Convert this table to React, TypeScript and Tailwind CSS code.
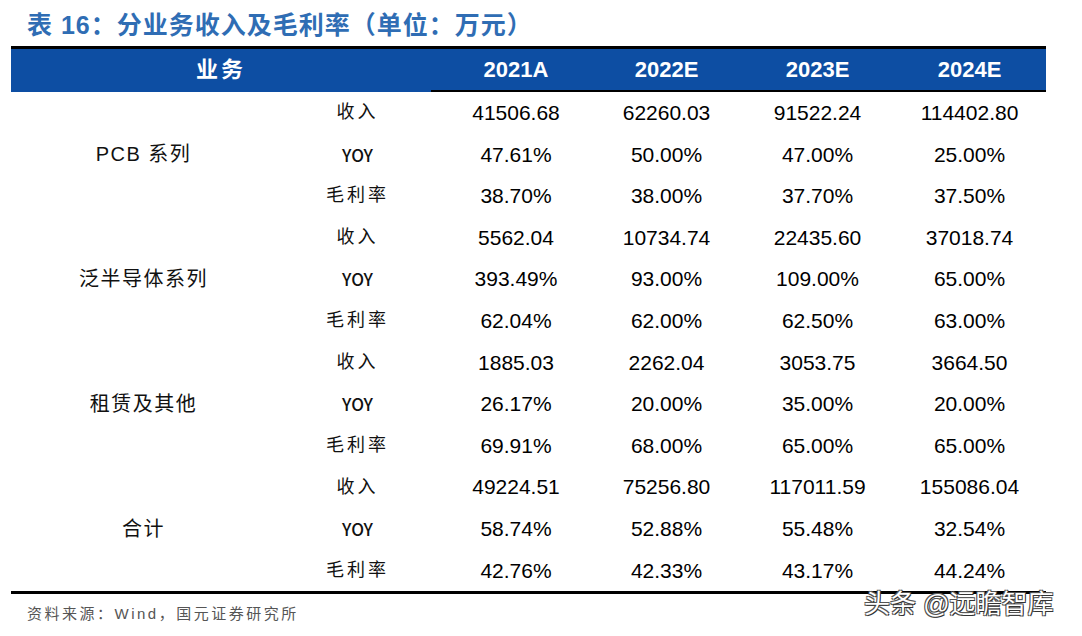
const cols = ["2021A", "2022E", "2023E", "2024E"];

const groups = [
  {
    name: "PCB 系列",
    rows: [
      ["收入", "41506.68", "62260.03", "91522.24", "114402.80"],
      ["YOY", "47.61%", "50.00%", "47.00%", "25.00%"],
      ["毛利率", "38.70%", "38.00%", "37.70%", "37.50%"],
    ],
  },
  {
    name: "泛半导体系列",
    rows: [
      ["收入", "5562.04", "10734.74", "22435.60", "37018.74"],
      ["YOY", "393.49%", "93.00%", "109.00%", "65.00%"],
      ["毛利率", "62.04%", "62.00%", "62.50%", "63.00%"],
    ],
  },
  {
    name: "租赁及其他",
    rows: [
      ["收入", "1885.03", "2262.04", "3053.75", "3664.50"],
      ["YOY", "26.17%", "20.00%", "35.00%", "20.00%"],
      ["毛利率", "69.91%", "68.00%", "65.00%", "65.00%"],
    ],
  },
  {
    name: "合计",
    rows: [
      ["收入", "49224.51", "75256.80", "117011.59", "155086.04"],
      ["YOY", "58.74%", "52.88%", "55.48%", "32.54%"],
      ["毛利率", "42.76%", "42.33%", "43.17%", "44.24%"],
    ],
  },
];

const cjk = { fontFamily: '"Liberation Sans", "Noto Sans CJK SC", sans-serif' };

export default function App() {
  return (
    <div className="relative h-[636px] w-[1082px] bg-white" style={cjk}>
      <div className="h-[46px] pl-[27px] pt-[7px] text-[25px] font-bold leading-[36px] tracking-[1px] text-[#2f6db4]">
        表 16：分业务收入及毛利率（单位：万元）
      </div>

      <div className="ml-[11px] w-[1035px] border-t-[3px] border-black">
        {/* header */}
        <div className="flex h-[43px] bg-[#0d4ea3] text-[22px] font-bold text-white">
          <div className="flex w-[420px] items-center justify-center pb-[2px] tracking-[3px]">业务</div>
          <div className="flex flex-1 border-b-[2px] border-black">
            <div className="w-[10px]" />
            {cols.map((c, i) => (
              <div
                key={c}
                className={`flex items-center justify-center ${i === 3 ? "w-[153px]" : i === 0 ? "w-[150px]" : "w-[151px]"}`}
              >
                {c}
              </div>
            ))}
          </div>
        </div>

        {/* body */}
        {groups.map((g) => (
          <div key={g.name} className="flex">
            <div className="flex w-[263px] items-center justify-center pl-[2px] text-[20px] tracking-[1.5px] text-[#111]">
              {g.name}
            </div>
            <div className="flex flex-1 flex-col">
              {g.rows.map((r) => (
                <div key={r[0]} className="flex h-[41.6px] items-center text-[21px] text-black">
                  <div
                    className={`flex w-[167px] items-center justify-center text-[#111] ${
                      r[0] === "YOY"
                        ? "font-['Noto_Sans_CJK_SC',sans-serif] text-[17px] font-medium"
                        : "text-[18px] tracking-[3px]"
                    }`}
                  >
                    {r[0]}
                  </div>
                  <div className="w-[150px] text-center">{r[1]}</div>
                  <div className="w-[151px] text-center">{r[2]}</div>
                  <div className="w-[151px] text-center">{r[3]}</div>
                  <div className="w-[153px] text-center">{r[4]}</div>
                </div>
              ))}
            </div>
          </div>
        ))}
        <div className="border-b-[3px] border-black" />
      </div>

      <div className="pl-[27px] pt-[9px] text-[15px] tracking-[2.5px] text-[#555]">
        资料来源：Wind，国元证券研究所
      </div>

      <div
        className="absolute left-[864px] top-[588px] text-[26px] leading-[32px] text-white"
        style={{ textShadow: "1px 1px 0 #333, -1px -1px 0 #555, 1px -1px 0 #555, -1px 1px 0 #555" }}
      >
        头条 @远瞻智库
      </div>
    </div>
  );
}
